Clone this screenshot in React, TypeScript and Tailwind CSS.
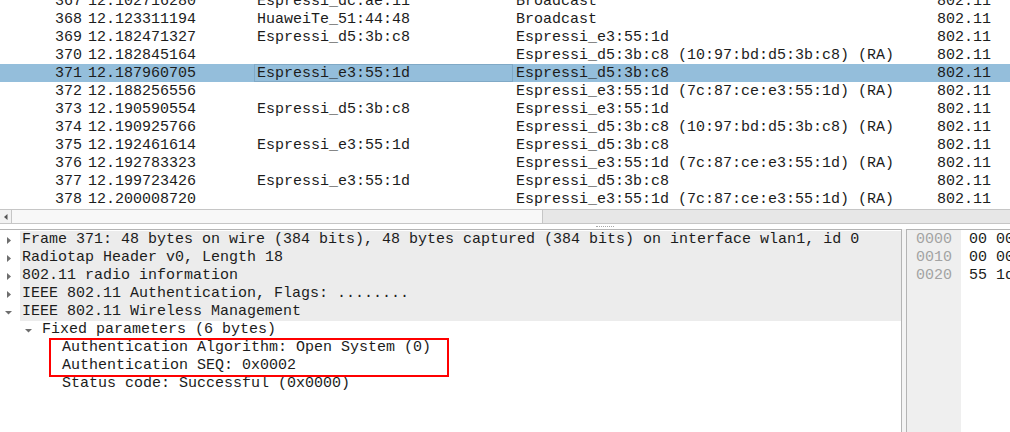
import React from "react";

type Packet = {
  no: number;
  time: string;
  src: string;
  dst: string;
  proto: string;
};

const packets: Packet[] = [
  { no: 367, time: "12.102716280", src: "Espressi_dc:ae:11", dst: "Broadcast", proto: "802.11" },
  { no: 368, time: "12.123311194", src: "HuaweiTe_51:44:48", dst: "Broadcast", proto: "802.11" },
  { no: 369, time: "12.182471327", src: "Espressi_d5:3b:c8", dst: "Espressi_e3:55:1d", proto: "802.11" },
  { no: 370, time: "12.182845164", src: "", dst: "Espressi_d5:3b:c8 (10:97:bd:d5:3b:c8) (RA)", proto: "802.11" },
  { no: 371, time: "12.187960705", src: "Espressi_e3:55:1d", dst: "Espressi_d5:3b:c8", proto: "802.11" },
  { no: 372, time: "12.188256556", src: "", dst: "Espressi_e3:55:1d (7c:87:ce:e3:55:1d) (RA)", proto: "802.11" },
  { no: 373, time: "12.190590554", src: "Espressi_d5:3b:c8", dst: "Espressi_e3:55:1d", proto: "802.11" },
  { no: 374, time: "12.190925766", src: "", dst: "Espressi_d5:3b:c8 (10:97:bd:d5:3b:c8) (RA)", proto: "802.11" },
  { no: 375, time: "12.192461614", src: "Espressi_e3:55:1d", dst: "Espressi_d5:3b:c8", proto: "802.11" },
  { no: 376, time: "12.192783323", src: "", dst: "Espressi_e3:55:1d (7c:87:ce:e3:55:1d) (RA)", proto: "802.11" },
  { no: 377, time: "12.199723426", src: "Espressi_e3:55:1d", dst: "Espressi_d5:3b:c8", proto: "802.11" },
  { no: 378, time: "12.200008720", src: "", dst: "Espressi_e3:55:1d (7c:87:ce:e3:55:1d) (RA)", proto: "802.11" },
];

const SELECTED = 371;

type TreeItem = {
  text: string;
  level: number;
  state: "open" | "closed" | "leaf";
};

const tree: TreeItem[] = [
  { text: "Frame 371: 48 bytes on wire (384 bits), 48 bytes captured (384 bits) on interface wlan1, id 0", level: 0, state: "closed" },
  { text: "Radiotap Header v0, Length 18", level: 0, state: "closed" },
  { text: "802.11 radio information", level: 0, state: "closed" },
  { text: "IEEE 802.11 Authentication, Flags: ........", level: 0, state: "closed" },
  { text: "IEEE 802.11 Wireless Management", level: 0, state: "open" },
  { text: "Fixed parameters (6 bytes)", level: 1, state: "open" },
  { text: "Authentication Algorithm: Open System (0)", level: 2, state: "leaf" },
  { text: "Authentication SEQ: 0x0002", level: 2, state: "leaf" },
  { text: "Status code: Successful (0x0000)", level: 2, state: "leaf" },
];

const hexRows = [
  { off: "0000", bytes: "00 00 12 00 2e 48 00 00" },
  { off: "0010", bytes: "00 00 b0 00 3a 01 10 97" },
  { off: "0020", bytes: "55 1d 00 00 02 00 00 00" },
];

function Arrow({ state }: { state: TreeItem["state"] }) {
  if (state === "leaf") return <span className="w-[20px] shrink-0" />;
  return (
    <span className="w-[20px] shrink-0 flex items-center">
      {state === "closed" ? (
        <svg width="20" height="18" viewBox="0 0 20 18">
          <polygon points="7,6 11,9.5 7,13" fill="#6e6e6e" />
        </svg>
      ) : (
        <svg width="20" height="18" viewBox="0 0 20 18">
          <polygon points="5,8 12,8 8.5,11.5" fill="#6e6e6e" />
        </svg>
      )}
    </span>
  );
}

function PacketRow({ p }: { p: Packet }) {
  const sel = p.no === SELECTED;
  return (
    <div className={`flex h-[18px] leading-[18px] whitespace-pre ${sel ? "bg-[#94bedb]" : ""}`}>
      <span className="w-[84px] shrink-0 text-right pr-[2px] pt-[1px]">{p.no}</span>
      <span className="w-[170px] shrink-0 pl-[4px] pt-[1px]">{p.time}</span>
      <span
        className={`w-[259px] shrink-0 pl-[2px] border ${
          sel ? "border-[#80a9c6]" : "border-transparent"
        }`}
      >
        {p.src}
      </span>
      <span className="w-[421px] shrink-0 pl-[3px] pt-[1px]">{p.dst}</span>
      <span className="flex-1 pl-[3px] pt-[1px]">{p.proto}</span>
    </div>
  );
}

export default function App() {
  return (
    <div className="w-[1010px] h-[432px] overflow-hidden bg-white text-[#1c1c1c] text-[15px] font-['Liberation_Mono',monospace] flex flex-col">
      {/* Packet list */}
      <div className="h-[209px] shrink-0 overflow-hidden">
        <div className="-mt-[8px]">
          {packets.map((p) => (
            <PacketRow key={p.no} p={p} />
          ))}
        </div>
      </div>

      {/* Horizontal scrollbar */}
      <div className="h-[15px] shrink-0 flex border-y border-[#c6c6c6] bg-[#e7e7e7]">
        <div className="w-[12px] shrink-0 flex items-center justify-center border-r border-[#c6c6c6] bg-[#f2f2f2]">
          <svg width="6" height="8" viewBox="0 0 6 8">
            <polygon points="4.5,1 1,4 4.5,7" fill="#555" />
          </svg>
        </div>
        <div className="w-[531px] shrink-0 bg-[#f8f8f8] border-r border-[#c6c6c6]" />
        <div className="flex-1" />
      </div>

      {/* Splitter */}
      <div className="h-[5px] shrink-0 flex items-center justify-center">
        <div className="ml-[200px] w-[18px] border-t border-dotted border-[#a8a8a8]" />
      </div>

      {/* Lower panes */}
      <div className="flex-1 flex min-h-0">
        <div className="relative w-[902px] shrink-0 border-t border-r border-[#b4b4b4] pt-[1px]">
          {tree.map((t, i) => (
            <div key={i} className="flex h-[18px] leading-[18px] whitespace-pre" style={{ paddingLeft: t.level * 20 }}>
              <Arrow state={t.state} />
              <span className={`flex-1 pl-[2px] ${t.level === 0 ? "bg-[#ececec]" : ""}`}>{t.text}</span>
            </div>
          ))}
          <div className="absolute left-[49px] top-[108px] w-[400px] h-[39px] border-2 border-[#ff0000]" />
        </div>
        <div className="w-[4px] shrink-0 bg-[#f4f4f4]" />
        <div className="flex-1 flex border-t border-l border-[#b4b4b4] overflow-hidden">
          <div className="w-[54px] shrink-0 bg-[#efefef] pt-[1px] pl-[9px] text-[#a3a3a3]">
            {hexRows.map((r) => (
              <div key={r.off} className="h-[18px] leading-[18px]">
                {r.off}
              </div>
            ))}
          </div>
          <div className="flex-1 pt-[1px] pl-[8px] whitespace-pre overflow-hidden">
            {hexRows.map((r) => (
              <div key={r.off} className="h-[18px] leading-[18px]">
                {r.bytes}
              </div>
            ))}
          </div>
        </div>
      </div>
    </div>
  );
}
